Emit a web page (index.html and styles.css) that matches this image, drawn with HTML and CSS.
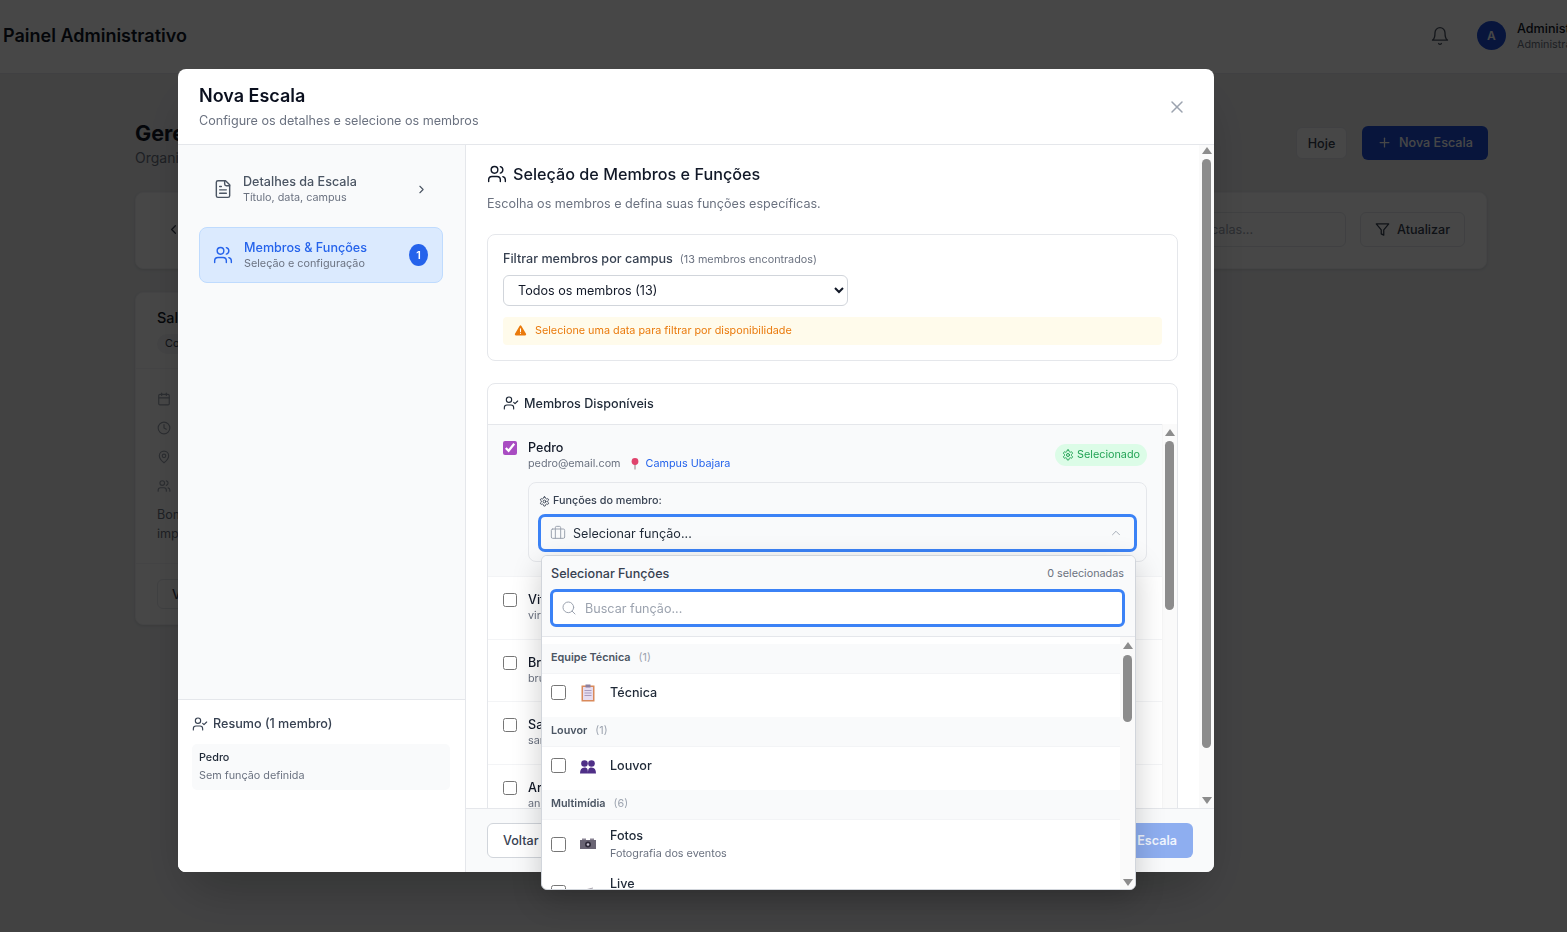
FILE: index.html
```html
<!DOCTYPE html>
<html lang="en">
  <head>
    <meta charset="UTF-8" />
    <meta name="viewport" content="width=device-width, initial-scale=1.0" />
    <title>Painel Administrativo</title>
    <link rel="stylesheet" href="styles.css">
  </head>
  <body>
    <svg class="sprite" width="0" height="0">
      <symbol id="i-users" viewBox="0 0 24 24"><path d="M16 21v-2a4 4 0 0 0-4-4H6a4 4 0 0 0-4 4v2"/><circle cx="9" cy="7" r="4"/><path d="M22 21v-2a4 4 0 0 0-3-3.87"/><path d="M16 3.13a4 4 0 0 1 0 7.75"/></symbol>
      <symbol id="i-user-check" viewBox="0 0 24 24"><path d="M16 21v-2a4 4 0 0 0-4-4H6a4 4 0 0 0-4 4v2"/><circle cx="9" cy="7" r="4"/><polyline points="16 11 18 13 22 9"/></symbol>
      <symbol id="i-gear" viewBox="0 0 24 24"><path d="M12.22 2h-.44a2 2 0 0 0-2 2v.18a2 2 0 0 1-1 1.73l-.43.25a2 2 0 0 1-2 0l-.15-.08a2 2 0 0 0-2.73.73l-.22.38a2 2 0 0 0 .73 2.73l.15.1a2 2 0 0 1 1 1.72v.51a2 2 0 0 1-1 1.74l-.15.09a2 2 0 0 0-.73 2.73l.22.38a2 2 0 0 0 2.73.73l.15-.08a2 2 0 0 1 2 0l.43.25a2 2 0 0 1 1 1.73V20a2 2 0 0 0 2 2h.44a2 2 0 0 0 2-2v-.18a2 2 0 0 1 1-1.73l.43-.25a2 2 0 0 1 2 0l.15.08a2 2 0 0 0 2.73-.73l.22-.39a2 2 0 0 0-.73-2.73l-.15-.08a2 2 0 0 1-1-1.74v-.5a2 2 0 0 1 1-1.74l.15-.09a2 2 0 0 0 .73-2.73l-.22-.38a2 2 0 0 0-2.73-.73l-.15.08a2 2 0 0 1-2 0l-.43-.25a2 2 0 0 1-1-1.73V4a2 2 0 0 0-2-2z"/><circle cx="12" cy="12" r="3"/></symbol>
    </svg>

    <!-- page behind the modal -->
    <header class="topbar">
      <h1 class="topbar-title">Painel Administrativo</h1>
      <div class="topbar-actions">
        <svg class="icon bell-icon" viewBox="0 0 24 24"><path d="M6 8a6 6 0 0 1 12 0c0 7 3 9 3 9H3s3-2 3-9"/><path d="M10.3 21a1.94 1.94 0 0 0 3.4 0"/></svg>
        <div class="avatar">A</div>
        <div class="user-info">
          <div class="user-name">Administrador</div>
          <div class="user-role">Administrador</div>
        </div>
      </div>
    </header>

    <main class="page">
      <div class="page-head">
        <div>
          <h2 class="page-title">Gerenciar Escalas</h2>
          <p class="page-sub">Organize as escalas da igreja</p>
        </div>
        <div class="page-actions">
          <button class="bg-btn hoje-btn">Hoje</button>
          <button class="bg-btn new-btn">
            <svg class="icon" viewBox="0 0 24 24"><path d="M5 12h14"/><path d="M12 5v14"/></svg>
            Nova Escala
          </button>
        </div>
      </div>

      <section class="toolbar">
        <svg class="icon prev-icon" viewBox="0 0 24 24"><path d="m15 18-6-6 6-6"/></svg>
        <div class="bg-search">Buscar escalas...</div>
        <button class="bg-btn update-btn">
          <svg class="icon" viewBox="0 0 24 24"><polygon points="22 3 2 3 10 12.46 10 19 14 21 14 12.46 22 3"/></svg>
          Atualizar
        </button>
      </section>

      <section class="bg-card">
        <div class="bg-card-top">
          <div class="bg-card-title">Sala de Culto</div>
          <span class="bg-chip">Confirmada</span>
        </div>
        <div class="bg-card-body">
          <svg class="icon" viewBox="0 0 24 24"><path d="M8 2v4"/><path d="M16 2v4"/><rect width="18" height="18" x="3" y="4" rx="2"/><path d="M3 10h18"/></svg>
          <svg class="icon" viewBox="0 0 24 24"><circle cx="12" cy="12" r="10"/><polyline points="12 6 12 12 16 14"/></svg>
          <svg class="icon" viewBox="0 0 24 24"><path d="M20 10c0 6-8 12-8 12s-8-6-8-12a8 8 0 0 1 16 0Z"/><circle cx="12" cy="10" r="3"/></svg>
          <svg class="icon" viewBox="0 0 24 24"><use href="#i-users"/></svg>
          <p class="bg-card-text">Bom dia a todos, escala<br>importante para o culto</p>
        </div>
        <div class="bg-card-foot"><button class="bg-btn">Ver detalhes</button></div>
      </section>
    </main>

    <div class="overlay">
      <div class="modal">
        <div class="modal-head">
          <div>
            <h2 class="modal-title">Nova Escala</h2>
            <p class="modal-sub">Configure os detalhes e selecione os membros</p>
          </div>
          <svg class="icon close-icon" viewBox="0 0 24 24"><path d="M18 6 6 18"/><path d="m6 6 12 12"/></svg>
        </div>

        <div class="modal-body">
          <aside class="sidebar">
            <nav class="steps">
              <div class="step">
                <svg class="icon step-icon" viewBox="0 0 24 24"><path d="M15 2H6a2 2 0 0 0-2 2v16a2 2 0 0 0 2 2h12a2 2 0 0 0 2-2V7Z"/><path d="M14 2v4a2 2 0 0 0 2 2h4"/><path d="M10 9H8"/><path d="M16 13H8"/><path d="M16 17H8"/></svg>
                <div class="step-text">
                  <div class="step-name">Detalhes da Escala</div>
                  <div class="step-desc">Título, data, campus</div>
                </div>
                <svg class="icon step-chevron" viewBox="0 0 24 24"><path d="m9 18 6-6-6-6"/></svg>
              </div>
              <div class="step step-active">
                <svg class="icon step-icon" viewBox="0 0 24 24"><use href="#i-users"/></svg>
                <div class="step-text">
                  <div class="step-name">Membros &amp; Funções</div>
                  <div class="step-desc">Seleção e configuração</div>
                </div>
                <span class="step-badge">1</span>
              </div>
            </nav>
            <div class="summary">
              <div class="summary-title">
                <svg class="icon" viewBox="0 0 24 24"><use href="#i-user-check"/></svg>
                Resumo (1 membro)
              </div>
              <div class="summary-card">
                <div class="summary-name">Pedro</div>
                <div class="summary-role">Sem função definida</div>
              </div>
            </div>
          </aside>

          <div class="content">
            <div class="scroll-area">
              <h3 class="section-title">
                <svg class="icon" viewBox="0 0 24 24"><use href="#i-users"/></svg>
                Seleção de Membros e Funções
              </h3>
              <p class="section-sub">Escolha os membros e defina suas funções específicas.</p>

              <div class="card filter-card">
                <div class="filter-label">Filtrar membros por campus <span class="filter-count">(13 membros encontrados)</span></div>
                <select class="campus-select">
                  <option>Todos os membros (13)</option>
                </select>
                <div class="notice">
                  <svg class="notice-icon" viewBox="0 0 24 24"><path d="M10.3 3.9 1.8 18a2 2 0 0 0 1.7 3h17a2 2 0 0 0 1.7-3L13.7 3.9a2 2 0 0 0-3.4 0Z"/><path class="notice-mark" d="M12 9v5M12 17.2v.1"/></svg>
                  Selecione uma data para filtrar por disponibilidade
                </div>
              </div>

              <div class="card members-card">
                <div class="members-head">
                  <svg class="icon" viewBox="0 0 24 24"><use href="#i-user-check"/></svg>
                  Membros Disponíveis
                </div>
                <div class="members-list">
                  <div class="member member-selected">
                    <div class="member-top">
                      <input type="checkbox" class="member-check" checked>
                      <div class="member-info">
                        <div class="member-name">Pedro</div>
                        <div class="member-meta">
                          <span>pedro@email.com</span>
                          <span class="campus">
                            <svg class="pin" viewBox="0 0 10 12"><path class="pin-needle" d="M5 5v6.500"/><circle class="pin-head" cx="5" cy="3.500" r="3.400"/></svg>
                            Campus Ubajara
                          </span>
                        </div>
                      </div>
                      <span class="selected-badge">
                        <svg class="icon" viewBox="0 0 24 24"><use href="#i-gear"/></svg>
                        Selecionado
                      </span>
                    </div>
                    <div class="roles-box">
                      <div class="roles-label">
                        <svg class="icon" viewBox="0 0 24 24"><use href="#i-gear"/></svg>
                        Funções do membro:
                      </div>
                      <div class="role-trigger">
                        <svg class="icon" viewBox="0 0 24 24"><path d="M16 20V4a2 2 0 0 0-2-2h-4a2 2 0 0 0-2 2v16"/><rect width="20" height="14" x="2" y="6" rx="2"/></svg>
                        <span>Selecionar função...</span>
                        <svg class="icon trigger-chevron" viewBox="0 0 24 24"><path d="m18 15-6-6-6 6"/></svg>
                      </div>
                    </div>
                  </div>
                  <div class="member">
                    <div class="member-top">
                      <input type="checkbox" class="member-check">
                      <div class="member-info"><div class="member-name">Vitor</div><div class="member-meta"><span>vir@email.com</span></div></div>
                    </div>
                  </div>
                  <div class="member">
                    <div class="member-top">
                      <input type="checkbox" class="member-check">
                      <div class="member-info"><div class="member-name">Bruno</div><div class="member-meta"><span>bruno@email.com</span></div></div>
                    </div>
                  </div>
                  <div class="member">
                    <div class="member-top">
                      <input type="checkbox" class="member-check">
                      <div class="member-info"><div class="member-name">Sara</div><div class="member-meta"><span>sara@email.com</span></div></div>
                    </div>
                  </div>
                  <div class="member">
                    <div class="member-top">
                      <input type="checkbox" class="member-check">
                      <div class="member-info"><div class="member-name">Ariana</div><div class="member-meta"><span>ana@email.com</span></div></div>
                    </div>
                  </div>
                </div>
                <div class="sbar sbar-members"><i class="sbar-up"></i><b class="sbar-thumb"></b></div>
              </div>
            </div>
            <div class="sbar sbar-main"><i class="sbar-up"></i><b class="sbar-thumb"></b><i class="sbar-down"></i></div>

            <div class="modal-foot">
              <button class="btn-back">Voltar</button>
              <button class="btn-create">Criar Escala</button>
            </div>
          </div>
        </div>
      </div>

      <!-- roles dropdown, sticks out of the modal -->
      <div class="dropdown">
        <div class="dd-head">
          <div class="dd-head-row">
            <span class="dd-title">Selecionar Funções</span>
            <span class="dd-count">0 selecionadas</span>
          </div>
          <div class="dd-search">
            <svg class="icon" viewBox="0 0 24 24"><circle cx="11" cy="11" r="8"/><path d="m21 21-4.3-4.3"/></svg>
            Buscar função...
          </div>
        </div>
        <div class="dd-list">
          <div class="dd-group">Equipe Técnica <span class="dd-group-count">(1)</span></div>
          <div class="dd-item">
            <input type="checkbox" class="dd-check">
            <svg class="emoji" viewBox="0 0 18 18"><rect x="2.500" y="1.500" width="13" height="16" fill="#d98a5b"/><rect x="4" y="3" width="10" height="13" fill="#e6dcf0"/><path d="M5.500 6.500h7M5.500 9h7M5.500 11.500h7" stroke="#a99bbd"/><rect x="6.500" y="0.500" width="5" height="3" fill="#8b7f9e"/></svg>
            <div class="dd-item-name">Técnica</div>
          </div>
          <div class="dd-group">Louvor <span class="dd-group-count">(1)</span></div>
          <div class="dd-item">
            <input type="checkbox" class="dd-check">
            <svg class="emoji" viewBox="0 0 18 18"><circle cx="5.500" cy="6.500" r="3.300" fill="#4f2f87"/><circle cx="12.500" cy="6.500" r="3.300" fill="#4f2f87"/><path d="M1 16.500c0-4 1.500-6 4.500-6s3.500 2 3.500 6zM9 16.500c0-4 .5-6 3.500-6s4.500 2 4.500 6z" fill="#4f2f87"/></svg>
            <div class="dd-item-name">Louvor</div>
          </div>
          <div class="dd-group">Multimídia <span class="dd-group-count">(6)</span></div>
          <div class="dd-item dd-item-tall">
            <input type="checkbox" class="dd-check">
            <svg class="emoji" viewBox="0 0 18 18"><rect x="3" y="3.500" width="4" height="2" fill="#8a8494"/><rect x="11" y="3.500" width="4" height="2" fill="#8a8494"/><rect x="1" y="5" width="16" height="9" fill="#6a6574"/><circle cx="9" cy="9.500" r="3" fill="#2e2a38"/><circle cx="9" cy="9.500" r="1.300" fill="#c9c5d2"/></svg>
            <div class="dd-item-text">
              <div class="dd-item-name">Fotos</div>
              <div class="dd-item-desc">Fotografia dos eventos</div>
            </div>
          </div>
          <div class="dd-item dd-item-tall">
            <input type="checkbox" class="dd-check">
            <svg class="emoji" viewBox="0 0 18 18"><path d="M2 8 14 5" stroke="#a8a4ad"/></svg>
            <div class="dd-item-text">
              <div class="dd-item-name">Live</div>
              <div class="dd-item-desc">Transmissão ao vivo</div>
            </div>
          </div>
        </div>
        <div class="sbar sbar-dd"><i class="sbar-up"></i><b class="sbar-thumb"></b><i class="sbar-down"></i></div>
      </div>
    </div>
  </body>
</html>
```

FILE: styles.css
```css
* {
  box-sizing: border-box;
}

html,
body {
  height: 100%;
}

body {
  margin: 0;
  font-family: Inter, "Noto Sans", sans-serif;
  background-color: #ebecee;
  color: #111827;
  overflow: hidden;
}

h1,
h2,
h3,
p {
  margin: 0;
}

.sprite {
  position: absolute;
}

.icon {
  fill: none;
  stroke: currentColor;
  stroke-width: 2;
  stroke-linecap: round;
  stroke-linejoin: round;
  flex-shrink: 0;
}

/* page behind the modal */
.topbar {
  width: 1615px;
  height: 74px;
  padding: 0 13px 2px 3px;
  display: flex;
  align-items: center;
  justify-content: space-between;
  background-color: white;
  border-bottom: 1px solid #e5e7eb;
}

.topbar-title {
  font-size: 18px;
  font-weight: 600;
  color: #111827;
}

.topbar-actions {
  display: flex;
  align-items: center;
}

.bell-icon {
  width: 20px;
  height: 20px;
  stroke-width: 1.6;
  color: #4b5563;
  margin-right: 27px;
}

.avatar {
  width: 29px;
  height: 29px;
  border-radius: 50%;
  background-color: #1d4ed8;
  color: white;
  font-size: 12px;
  font-weight: 600;
  display: flex;
  align-items: center;
  justify-content: center;
  margin-right: 11px;
}

.user-info {
  padding-top: 2px;
}

.user-name {
  font-size: 12.6px;
  font-weight: 500;
  line-height: 15px;
  color: #111827;
}

.user-role {
  font-size: 10.8px;
  line-height: 17px;
  color: #6b7280;
}

.page {
  width: 1353px;
  margin-left: 135px;
}

.page-head {
  height: 118px;
  padding-top: 46px;
  display: flex;
  justify-content: space-between;
}

.page-title {
  font-size: 21.6px;
  line-height: 26px;
  font-weight: 700;
  color: #111827;
}

.page-sub {
  font-size: 14px;
  line-height: 24px;
  color: #6b7280;
}

.page-actions {
  display: flex;
  align-items: flex-start;
  gap: 15px;
  padding-top: 6px;
}

.bg-btn {
  height: 35px;
  padding: 0 14px;
  display: flex;
  align-items: center;
  gap: 7px;
  font-family: inherit;
  font-size: 12.6px;
  font-weight: 500;
  white-space: nowrap;
  color: #374151;
  background-color: white;
  border: 1px solid #e5e7eb;
  border-radius: 6px;
}

.bg-btn .icon {
  width: 15px;
  height: 15px;
}

.hoje-btn {
  width: 51px;
  height: 32px;
  margin-top: 1px;
  padding: 0;
  justify-content: center;
}

.new-btn {
  width: 126px;
  height: 34px;
  background-color: #1d4ed8;
  border: none;
  color: white;
  padding: 0 15px 1px;
}

.toolbar {
  height: 77px;
  margin-right: 1px;
  padding: 19px 21px 0 0;
  display: flex;
  justify-content: flex-end;
  gap: 14px;
  position: relative;
  background-color: white;
  border: 1px solid #f3f4f6;
  border-radius: 8px;
  box-shadow: 0 1px 3px rgba(0, 0, 0, 0.1);
}

.prev-icon {
  position: absolute;
  left: 30px;
  top: 29px;
  width: 15px;
  height: 15px;
  color: #374151;
}

.bg-search {
  width: 300px;
  height: 35px;
  padding-left: 105px;
  font-size: 12.6px;
  line-height: 33px;
  color: #9ca3af;
  border: 1px solid #e5e7eb;
  border-radius: 6px;
}

.update-btn {
  width: 105px;
}

.bg-card {
  width: 400px;
  height: 333px;
  margin-top: 23px;
  background-color: white;
  border: 1px solid #f3f4f6;
  border-radius: 8px;
  box-shadow: 0 1px 3px rgba(0, 0, 0, 0.1);
}

.bg-card-top {
  height: 76px;
  padding: 15px 21px 0;
  border-bottom: 1px solid #f3f4f6;
}

.bg-card-title {
  font-size: 14.4px;
  line-height: 20px;
  font-weight: 500;
  color: #111827;
}

.bg-chip {
  display: inline-block;
  margin-top: 6px;
  padding: 0 8px;
  font-size: 10.8px;
  line-height: 20px;
  color: #374151;
  background-color: #f3f4f6;
  border-radius: 10px;
}

.bg-card-body {
  height: 195px;
  padding: 23px 21px 0;
  border-bottom: 1px solid #f3f4f6;
  display: flex;
  flex-direction: column;
  gap: 15px;
  color: #9ca3af;
}

.bg-card-body .icon {
  width: 14px;
  height: 14px;
}

.bg-card-text {
  margin-top: -3px;
  font-size: 12.6px;
  line-height: 19px;
  color: #6b7280;
}

.bg-card-foot {
  padding: 15px 21px;
}

.bg-card-foot .bg-btn {
  height: 30px;
}

/* modal */
.overlay {
  position: fixed;
  inset: 0;
  padding: 69px 0 0 178px;
  background-color: rgba(0, 0, 0, 0.72);
}

.modal {
  width: 1036px;
  height: 803px;
  display: flex;
  flex-direction: column;
  background-color: white;
  border-radius: 8px;
  box-shadow: 0 25px 50px -12px rgba(0, 0, 0, 0.25);
  overflow: hidden;
}

.modal-head {
  height: 76px;
  padding: 14px 27px 0 21px;
  display: flex;
  justify-content: space-between;
  border-bottom: 1px solid #e5e7eb;
}

.modal-title {
  font-size: 18px;
  line-height: 26px;
  font-weight: 600;
  color: #0a0f1e;
}

.modal-sub {
  margin-top: 2px;
  font-size: 12.6px;
  line-height: 20px;
  color: #6b7280;
}

.close-icon {
  width: 20px;
  height: 20px;
  margin-top: 14px;
  stroke-width: 1.8;
  color: #9ca3af;
}

.modal-body {
  flex: 1;
  min-height: 0;
  display: flex;
}

.sidebar {
  width: 288px;
  display: flex;
  flex-direction: column;
  background-color: #f9fafb;
  border-right: 1px solid #e5e7eb;
}

.steps {
  flex: 1;
  padding: 17px 22px 0 21px;
  display: flex;
  flex-direction: column;
  gap: 11px;
}

.step {
  height: 54px;
  padding: 0 14px 0 13px;
  display: flex;
  align-items: center;
  gap: 10px;
  border: 1px solid transparent;
  border-radius: 8px;
  color: #4b5563;
}

.step-active {
  height: 56px;
  gap: 11px;
  background-color: #dbeafe;
  border-color: #bfdbfe;
  color: #2563eb;
}

.step-icon {
  width: 20px;
  height: 20px;
  stroke-width: 1.7;
}

.step-text {
  flex: 1;
}

.step-name {
  font-size: 12.6px;
  line-height: 16px;
  font-weight: 500;
}

.step-desc {
  margin-top: 1px;
  font-size: 10.8px;
  line-height: 14px;
  color: #6b7280;
}

.step-chevron {
  width: 13px;
  height: 13px;
  color: #4b5563;
}

.step-badge {
  width: 19px;
  height: 22px;
  border-radius: 50%;
  background-color: #2563eb;
  color: white;
  font-size: 10.8px;
  font-weight: 600;
  display: flex;
  align-items: center;
  justify-content: center;
}

.summary {
  height: 173px;
  padding: 14px 15px 0 14px;
  background-color: white;
  border-top: 1px solid #e5e7eb;
}

.summary-title {
  display: flex;
  align-items: center;
  gap: 5px;
  font-size: 12.6px;
  line-height: 19px;
  font-weight: 500;
  color: #374151;
}

.summary-title .icon {
  width: 16px;
  height: 16px;
  stroke-width: 1.7;
}

.summary-card {
  margin-top: 11px;
  height: 46px;
  padding: 6px 7px;
  background-color: #f9fafb;
  border-radius: 5px;
}

.summary-name {
  font-size: 10.8px;
  line-height: 15px;
  font-weight: 500;
  color: #1f2937;
}

.summary-role {
  margin-top: 3px;
  font-size: 10.8px;
  line-height: 15px;
  color: #6b7280;
}

.content {
  flex: 1;
  min-width: 0;
  display: flex;
  flex-direction: column;
  position: relative;
}

.scroll-area {
  flex: 1;
  min-height: 0;
  padding: 17px 36px 0 21px;
  overflow: hidden;
}

.section-title {
  display: flex;
  align-items: center;
  gap: 6px;
  font-size: 16.2px;
  line-height: 24px;
  font-weight: 500;
  color: #111827;
}

.section-title .icon {
  width: 20px;
  height: 20px;
  stroke-width: 1.7;
}

.section-sub {
  margin-top: 8px;
  font-size: 12.6px;
  line-height: 20px;
  color: #6b7280;
}

.card {
  background-color: white;
  border: 1px solid #e5e7eb;
  border-radius: 8px;
}

.filter-card {
  margin-top: 20px;
  height: 127px;
  padding: 15px;
}

.filter-label {
  display: flex;
  align-items: baseline;
  gap: 7px;
  height: 17px;
  font-size: 12.6px;
  line-height: 17px;
  font-weight: 500;
  color: #374151;
}

.filter-count {
  font-size: 10.8px;
  font-weight: 400;
  color: #6b7280;
}

.campus-select {
  display: block;
  width: 345px;
  height: 31px;
  margin-top: 8px;
  padding-left: 10px;
  font-family: inherit;
  font-size: 12.6px;
  color: #111827;
  background-color: white;
  border: 1px solid #d1d5db;
  border-radius: 6px;
}

.notice {
  height: 28px;
  margin-top: 11px;
  padding: 0 0 2px 11px;
  display: flex;
  align-items: center;
  gap: 8px;
  font-size: 10.8px;
  color: #ea7a0c;
  background-color: #fffbeb;
  border-radius: 4px;
}

.notice-icon {
  width: 13px;
  height: 13px;
  fill: #ea7a0c;
}

.notice-mark {
  fill: none;
  stroke: white;
  stroke-width: 2;
  stroke-linecap: round;
}

.members-card {
  margin-top: 22px;
  position: relative;
  overflow: hidden;
}

.members-head {
  height: 41px;
  padding: 0 0 2px 15px;
  display: flex;
  align-items: center;
  gap: 5px;
  font-size: 12.6px;
  font-weight: 500;
  color: #1f2937;
  border-bottom: 1px solid #e5e7eb;
}

.members-head .icon {
  width: 16px;
  height: 16px;
  stroke-width: 1.7;
}

.members-list {
  margin-right: 15px;
}

.member {
  height: 62.5px;
  padding: 15px 15px 0;
  border-bottom: 1px solid #f3f4f6;
}

.member-selected {
  height: 152px;
  background-color: #f9fafb;
}

.member-top {
  display: flex;
  align-items: flex-start;
}

.member-check {
  width: 14px;
  height: 14px;
  margin: 1px 11px 0 0;
  accent-color: #a94cc2;
}

.member-info {
  flex: 1;
}

.member-name {
  font-size: 12.6px;
  line-height: 16px;
  font-weight: 500;
  color: #111827;
}

.member-meta {
  display: flex;
  gap: 9px;
  font-size: 10.8px;
  line-height: 15px;
  color: #6b7280;
}

.campus {
  display: flex;
  align-items: center;
  gap: 6px;
  color: #2563eb;
}

.pin {
  width: 10px;
  height: 12px;
}

.pin-needle {
  stroke: #b0a7ad;
  stroke-width: 1.5;
}

.pin-head {
  fill: #e0436d;
}

.selected-badge {
  height: 22px;
  margin-top: 4px;
  padding: 0 7px 1px;
  display: flex;
  align-items: center;
  gap: 3px;
  font-size: 10.8px;
  color: #22a355;
  background-color: #dcfce7;
  border-radius: 11px;
}

.selected-badge .icon {
  width: 12px;
  height: 12px;
}

.roles-box {
  height: 80px;
  margin: 11px 0 0 25px;
  padding: 10px 10px 0;
  background-color: #f9fafb;
  border: 1px solid #e5e7eb;
  border-radius: 8px;
}

.roles-label {
  display: flex;
  align-items: center;
  gap: 3px;
  font-size: 10.8px;
  line-height: 16px;
  font-weight: 500;
  color: #374151;
}

.roles-label .icon {
  width: 11px;
  height: 11px;
}

.role-trigger {
  height: 38px;
  margin: 5px -1px 0;
  padding: 0 11px 0 9px;
  display: flex;
  align-items: center;
  gap: 7px;
  font-size: 12.6px;
  color: #1f2937;
  border: 3px solid #3b82f6;
  border-radius: 7px;
}

.role-trigger .icon {
  width: 16px;
  height: 16px;
  stroke-width: 1.5;
  color: #9ca3af;
}

.role-trigger span {
  flex: 1;
}

.role-trigger .trigger-chevron {
  width: 14px;
  height: 14px;
}

.modal-foot {
  height: 64px;
  padding: 14px 21px 0;
  display: flex;
  justify-content: space-between;
  align-items: flex-start;
  background-color: #f9fafb;
  border-top: 1px solid #e5e7eb;
}

.btn-back {
  height: 35px;
  width: 90px;
  padding: 0 0 0 15px;
  text-align: left;
  font-family: inherit;
  font-size: 12.6px;
  font-weight: 500;
  color: #374151;
  background-color: white;
  border: 1px solid #d1d5db;
  border-radius: 6px;
}

.btn-create {
  height: 35px;
  width: 110px;
  padding: 0 16px 0 0;
  text-align: right;
  font-family: inherit;
  font-size: 12.6px;
  font-weight: 600;
  color: #eff4fe;
  background-color: #8eaef0;
  border: none;
  border-radius: 6px;
}

.sbar {
  position: absolute;
  background-color: #fafafa;
}

.sbar-thumb {
  position: absolute;
  left: 3px;
  width: 9px;
  background-color: #8c8c8c;
  border-radius: 5px;
}

.sbar-up,
.sbar-down {
  position: absolute;
  left: 2.5px;
  border-left: 5px solid transparent;
  border-right: 5px solid transparent;
}

.sbar-up {
  top: 2px;
  border-bottom: 7px solid #8c8c8c;
}

.sbar-down {
  bottom: 4px;
  border-top: 7px solid #8c8c8c;
}

.sbar-main {
  top: 0;
  right: 0;
  width: 15px;
  height: 663px;
}

.sbar-main .sbar-thumb {
  top: 14px;
  height: 589px;
}

.sbar-members {
  top: 40px;
  right: 0;
  bottom: 0;
  width: 15px;
  border-left: 1px solid #f5f5f5;
}

.sbar-members .sbar-up {
  top: 5px;
  left: 1.5px;
}

.sbar-members .sbar-thumb {
  top: 17px;
  left: 2px;
  height: 169px;
}

/* roles dropdown */
.dropdown {
  position: absolute;
  left: 541px;
  top: 555px;
  width: 595px;
  height: 335px;
  display: flex;
  flex-direction: column;
  background-color: white;
  border: 1px solid #d1d5db;
  border-radius: 6px;
  box-shadow: 0 10px 30px rgba(0, 0, 0, 0.2);
  overflow: hidden;
}

.dd-head {
  height: 81px;
  padding: 9px 10px 0 8px;
  background-color: #f9fafb;
  border-bottom: 1px solid #e5e7eb;
}

.dd-head-row {
  display: flex;
  align-items: center;
  justify-content: space-between;
  padding: 0 1px;
}

.dd-title {
  font-size: 12.6px;
  line-height: 17px;
  font-weight: 500;
  color: #374151;
}

.dd-count {
  font-size: 10.8px;
  color: #6b7280;
}

.dd-search {
  height: 38px;
  margin-top: 7px;
  padding-left: 8px;
  display: flex;
  align-items: center;
  gap: 8px;
  font-size: 12.6px;
  color: #9ca3af;
  background-color: white;
  border: 3px solid #3b82f6;
  border-radius: 6px;
}

.dd-search .icon {
  width: 16px;
  height: 16px;
  stroke-width: 1.5;
}

.dd-list {
  flex: 1;
  min-height: 0;
  padding: 7px 15px 0 0;
  overflow: hidden;
}

.dd-group {
  height: 30px;
  padding: 0 0 3px 9px;
  display: flex;
  align-items: center;
  gap: 8px;
  font-size: 10.8px;
  font-weight: 600;
  color: #4b5563;
  background-color: #f9fafb;
  border-bottom: 1px solid #f3f4f6;
}

.dd-group-count {
  font-weight: 400;
  color: #9ca3af;
}

.dd-item {
  height: 43px;
  padding: 0 0 6px 9px;
  display: flex;
  align-items: center;
}

.dd-item-tall {
  height: 48px;
  padding-bottom: 0;
}

.dd-check {
  width: 15px;
  height: 15px;
  margin: 0 13px 0 0;
}

.emoji {
  width: 18px;
  height: 18px;
  margin-right: 13px;
  flex-shrink: 0;
}

.dd-item-text {
  margin-top: 2px;
}

.dd-item-name {
  font-size: 12.6px;
  line-height: 16px;
  font-weight: 500;
  color: #1f2937;
}

.dd-item-desc {
  margin-top: 2px;
  font-size: 10.8px;
  line-height: 16px;
  color: #6b7280;
}

.sbar-dd {
  top: 81px;
  right: 0;
  bottom: 0;
  width: 15px;
}

.sbar-dd .sbar-up {
  top: 5px;
}

.sbar-dd .sbar-down {
  bottom: 3px;
}

.sbar-dd .sbar-thumb {
  top: 18px;
  height: 67px;
}
```
